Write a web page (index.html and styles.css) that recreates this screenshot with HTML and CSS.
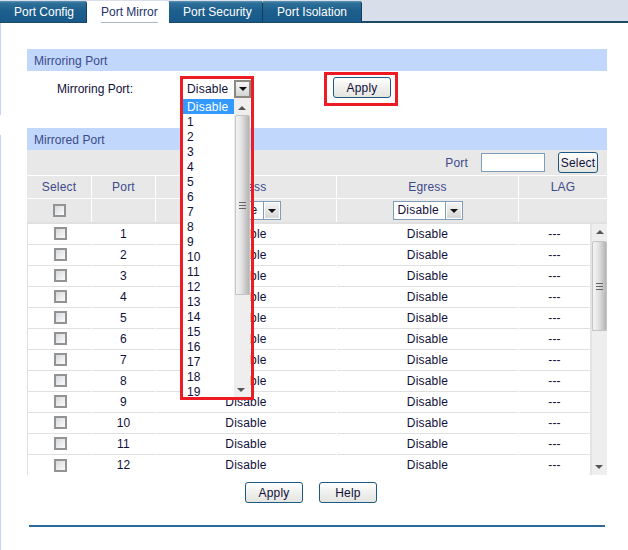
FILE: index.html
```html
<!DOCTYPE html>
<html lang="en">
<head>
<meta charset="utf-8">
<title>Port Mirror</title>
<link rel="stylesheet" href="styles.css">
</head>
<body>
<nav class="tabs">
  <a class="tab tab-1">Port Config</a>
  <a class="tab tab-active"><span>Port Mirror</span></a>
  <a class="tab tab-3">Port Security</a>
  <a class="tab tab-4">Port Isolation</a>
</nav>
<main class="page">
  <section>
    <h2 class="section-head">Mirroring Port</h2>
    <div class="form-row">
      <label class="form-label">Mirroring Port:</label>
      <div class="select select-main">
        <span class="select-value">Disable</span>
        <span class="select-btn select-btn-grey"><i class="arrow-down"></i></span>
        <div class="callout callout-select"></div>
        <div class="listbox">
          <ul class="options">
            <li class="option-on">Disable</li>
            <li>1</li><li>2</li><li>3</li><li>4</li><li>5</li><li>6</li><li>7</li><li>8</li><li>9</li>
            <li>10</li><li>11</li><li>12</li><li>13</li><li>14</li><li>15</li><li>16</li><li>17</li><li>18</li><li>19</li>
          </ul>
          <div class="scrollbar scrollbar-list">
            <i class="arrow-up"></i>
            <div class="thumb thumb-list"><b class="grip"></b></div>
            <i class="arrow-down arrow-grey"></i>
          </div>
        </div>
      </div>
      <div class="apply-wrap">
        <button class="btn btn-apply-top">Apply</button>
        <div class="callout callout-apply"></div>
      </div>
    </div>
  </section>
  <section>
    <h2 class="section-head">Mirrored Port</h2>
    <div class="search-row">
      <span class="search-label">Port</span>
      <input class="search-input" type="text">
      <button class="btn btn-select">Select</button>
    </div>
    <div class="grid grid-head">
      <div>Select</div><div>Port</div><div>Ingress</div><div>Egress</div><div>LAG</div>
    </div>
    <div class="grid grid-filter">
      <div><input class="check" type="checkbox"></div>
      <div></div>
      <div><div class="select"><span class="select-value">Disable</span><span class="select-btn"><i class="arrow-down"></i></span></div></div>
      <div><div class="select"><span class="select-value">Disable</span><span class="select-btn"><i class="arrow-down"></i></span></div></div>
      <div></div>
    </div>
    <div class="table-body">
      <div class="rows">
        <div class="grid row"><div><input class="check" type="checkbox"></div><div>1</div><div>Disable</div><div>Disable</div><div>---</div></div>
        <div class="grid row"><div><input class="check" type="checkbox"></div><div>2</div><div>Disable</div><div>Disable</div><div>---</div></div>
        <div class="grid row"><div><input class="check" type="checkbox"></div><div>3</div><div>Disable</div><div>Disable</div><div>---</div></div>
        <div class="grid row"><div><input class="check" type="checkbox"></div><div>4</div><div>Disable</div><div>Disable</div><div>---</div></div>
        <div class="grid row"><div><input class="check" type="checkbox"></div><div>5</div><div>Disable</div><div>Disable</div><div>---</div></div>
        <div class="grid row"><div><input class="check" type="checkbox"></div><div>6</div><div>Disable</div><div>Disable</div><div>---</div></div>
        <div class="grid row"><div><input class="check" type="checkbox"></div><div>7</div><div>Disable</div><div>Disable</div><div>---</div></div>
        <div class="grid row"><div><input class="check" type="checkbox"></div><div>8</div><div>Disable</div><div>Disable</div><div>---</div></div>
        <div class="grid row"><div><input class="check" type="checkbox"></div><div>9</div><div>Disable</div><div>Disable</div><div>---</div></div>
        <div class="grid row"><div><input class="check" type="checkbox"></div><div>10</div><div>Disable</div><div>Disable</div><div>---</div></div>
        <div class="grid row"><div><input class="check" type="checkbox"></div><div>11</div><div>Disable</div><div>Disable</div><div>---</div></div>
        <div class="grid row"><div><input class="check" type="checkbox"></div><div>12</div><div>Disable</div><div>Disable</div><div>---</div></div>
      </div>
      <div class="scrollbar scrollbar-table">
        <i class="arrow-up"></i>
        <div class="thumb thumb-table"><b class="grip"></b></div>
        <i class="arrow-down arrow-grey"></i>
      </div>
    </div>
  </section>
  <div class="actions">
    <button class="btn btn-action">Apply</button>
    <button class="btn btn-action">Help</button>
  </div>
  <hr class="rule">
</main>
</body>
</html>
```
FILE: styles.css
```css
* { box-sizing: border-box; }
html, body { margin: 0; height: 550px; overflow: hidden; }
body {
  background: #fff;
  font-family: "Liberation Sans", Arial, sans-serif;
  font-size: 12px;
  color: #10103a;
  letter-spacing: .2px;
}
.tabs {
  display: flex;
  height: 23px;
  background: #d8dfea;
  border-bottom: 2px solid #1d4a63;
  letter-spacing: 0;
}
.tab {
  height: 21px;
  margin-top: 1px;
  padding: 4px 0 0 14px;
  line-height: 14px;
  color: #fff;
  background: linear-gradient(#5f96b8 0, #2f7099 2px, #1d5f8c 10px, #17598a 100%);
  border-top-right-radius: 3px;
  border-right: 1px solid #123f5f;
}
.tab-1 { width: 87px; }
.tab-3 { width: 94px; }
.tab-4 { width: 99px; }
.tab-active {
  width: 82px;
  height: 23px;
  background: #fff;
  color: #25306a;
  border: 0;
  position: relative;
}
.tab-active span { display: inline-block; border-bottom: 1px solid #aeb6bf; height: 18px; }
.page {
  height: 527px;
  padding: 26px 21px 0 27px;
  background:
    linear-gradient(#c1d7fb, #c1d7fb) 0 0 / 1px 92px no-repeat,
    linear-gradient(#c1d7fb, #c1d7fb) 0 112px / 1px 420px no-repeat;
}
.section-head {
  margin: 0;
  height: 22px;
  padding: 1px 0 0 7px;
  line-height: 23px;
  font-size: 12px;
  font-weight: 400;
  letter-spacing: .05px;
  color: #3c4a8a;
  background: #c1d7fb;
}
.form-row {
  display: flex;
  align-items: flex-start;
  height: 57px;
  padding: 9px 0 0 30px;
}
.form-label { width: 127px; padding-top: 1px; line-height: 17px; letter-spacing: 0; }
.select {
  display: inline-flex;
  position: relative;
  width: 70px;
  height: 19px;
  border: 1px solid #7f9db9;
  background: #fff;
  line-height: 17px;
  text-align: left;
  color: #10103a;
}
.select-value { flex: 1; padding-left: 4px; }
.select-btn {
  width: 17px;
  border: 1px solid #7f9db9;
  border-width: 0 0 0 1px;
  background: linear-gradient(#f6f6f6, #d4d4d4);
  display: flex;
  align-items: center;
  justify-content: center;
  box-shadow: inset 0 0 0 1px #fff;
}
.select-main { width: 67px; height: 18px; border: 0; }
.select-main .select-value { padding: 1px 0 0 3px; }
.select-btn-grey { border: 2px solid #8a8a80; box-shadow: none; }
.arrow-down, .arrow-up {
  display: block;
  width: 0;
  height: 0;
  border-left: 4px solid transparent;
  border-right: 4px solid transparent;
}
.arrow-down { border-top: 4px solid #111; }
.arrow-up { border-bottom: 4px solid #555; }
.arrow-grey { border-top-color: #555; }
.callout {
  position: absolute;
  border: 3px solid #ed1c24;
  pointer-events: none;
  z-index: 5;
}
.callout-select { left: -4px; top: -4px; width: 74px; height: 324px; }
.callout-apply { left: -9px; top: -5px; width: 74px; height: 34px; }
.listbox {
  position: absolute;
  left: -1px;
  top: 18px;
  width: 67px;
  height: 300px;
  display: flex;
  background: #fff;
  overflow: hidden;
  z-index: 4;
}
.options {
  list-style: none;
  margin: 0;
  padding: 1px 0 0;
  width: 51px;
  flex: none;
}
.options li { height: 15px; padding: 1px 0 0 4px; line-height: 15px; color: #10103a; }
.options .option-on { background: #3399ff; color: #fff; }
.scrollbar {
  display: flex;
  flex-direction: column;
  align-items: center;
  background: #eeeeee;
  flex: none;
  position: relative;
}
.scrollbar-list { width: 16px; padding-top: 8px; }
.scrollbar-table { width: 17px; padding-top: 6px; border-left: 2px solid #e4e4e4; }
.scrollbar-list .arrow-down, .scrollbar-table .arrow-down { position: absolute; left: 3px; bottom: 6px; }
.thumb {
  width: 15px;
  display: flex;
  align-items: center;
  justify-content: center;
  border: 1px solid #c4c4c4;
  border-radius: 2px 2px 0 0;
  background: linear-gradient(90deg, #f4f4f4, #e4e4e4 40%, #b4b4b4);
}
.thumb-list { height: 180px; margin-top: 5px; }
.thumb-table { height: 90px; margin-top: 7px; }
.grip {
  display: block;
  width: 7px;
  height: 7px;
  background: repeating-linear-gradient(#666 0 1px, transparent 1px 3px);
}
.btn {
  display: inline-block;
  padding: 0;
  height: 21px;
  width: 58px;
  border: 1px solid #1c5a86;
  border-radius: 3px;
  font: inherit;
  letter-spacing: inherit;
  color: #10103a;
  background: linear-gradient(#fff, #f0f0ee 50%, #e4e4e0);
  text-align: center;
}
.apply-wrap { position: relative; margin-left: 82px; margin-top: -3px; }
.search-row {
  display: flex;
  align-items: center;
  justify-content: flex-end;
  height: 25px;
  margin-bottom: 1px;
  padding-right: 9px;
  background: #e8e8e8;
}
.search-label { color: #3c4a8a; margin-right: 13px; }
.search-input {
  width: 64px;
  height: 19px;
  margin: 0 13px 0 0;
  padding: 0;
  border: 1px solid #7f9db9;
  background: #fff;
}
.btn-select { width: 40px; height: 21px; }
.grid {
  display: grid;
  grid-template-columns: 64px 63px 180px 181px 1fr;
  column-gap: 1px;
  text-align: center;
}
.grid > div { background: #e8e8e8; }
.grid-head { margin-bottom: 1px; }
.grid-head > div { height: 22px; line-height: 22px; color: #3c4a8a; }
.grid-filter > div {
  height: 23px;
  display: flex;
  align-items: center;
  justify-content: center;
}
.check {
  appearance: none;
  display: block;
  width: 13px;
  height: 13px;
  margin: 0 0 0 1px;
  border: 2px solid #939393;
  background: linear-gradient(135deg, #d6dadd, #fbfbfb);
}
.table-body {
  display: flex;
  height: 253px;
  overflow: hidden;
  border-top: 2px solid #e0e0e0;
  border-left: 1px solid #e0e0e0;
}
.rows { flex: 1; min-width: 0; }
.row { grid-template-columns: 63px 63px 180px 181px 1fr; }
.row > div {
  display: flex;
  align-items: center;
  justify-content: center;
  height: 21px;
  padding-bottom: 1px;
  background: #fff;
  border-bottom: 1px solid #e0e0e0;
  color: #10103a;
}
.row:last-child > div { border-bottom: 0; }
.actions {
  display: flex;
  justify-content: center;
  gap: 16px;
  padding: 7px 12px 0 0;
}
.btn-action { width: 58px; }
.rule {
  height: 2px;
  margin: 22px 2px 0;
  border: 0;
  background: #2a6a9a;
}
```
